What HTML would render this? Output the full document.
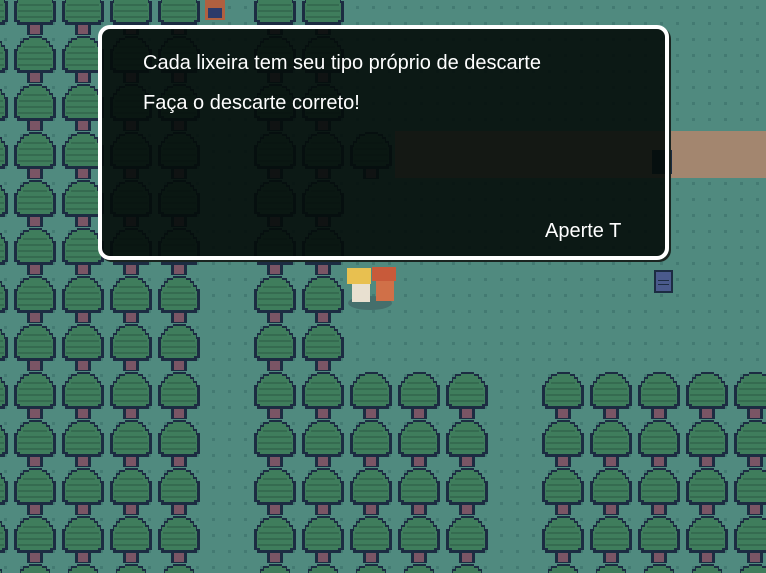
<!DOCTYPE html>
<html><head><meta charset="utf-8"><style>
html,body{margin:0;padding:0;width:766px;height:573px;overflow:hidden;background:#508a7f}
.dlg{position:absolute;left:98px;top:25px;width:563px;height:227px;border:4px solid #fff;border-radius:12px;background:rgba(4,12,10,0.9);box-shadow:2px 2px 0 #1a2420}
.t{position:absolute;color:#fff;font-family:"Liberation Sans",sans-serif;font-size:20px;white-space:nowrap}
</style></head><body>
<svg width="766" height="573" style="position:absolute;left:0;top:0">
<defs>
<pattern id="dots" patternUnits="userSpaceOnUse" width="16" height="16" x="4" y="6">
<rect x="0" y="0" width="3" height="3" fill="#437a72"/>
</pattern>
<pattern id="tree" patternUnits="userSpaceOnUse" width="48" height="48" x="14" y="36">
<rect x="13" y="35" width="16" height="12" fill="#1c2c42"/>
<rect x="16" y="36" width="10" height="10" fill="#7a5565"/>
<path d="M15 0H28V2H33V5H36V9H39V13H42V34H39V37H3V34H0V13H3V9H6V5H9V2H15Z" fill="#1c2c42"/>
<path d="M15 2H28V4H32V7H35V11H38V15H39V32H36V34H6V32H3V15H4V11H7V7H10V4H15Z" fill="#3f7d5c"/>
<rect x="9" y="10" width="24" height="2" fill="#356b50"/>
<rect x="5" y="16" width="32" height="2" fill="#356b50"/>
<rect x="4" y="22" width="34" height="2" fill="#356b50"/>
<rect x="4" y="28" width="34" height="2" fill="#356b50"/>
</pattern>
</defs>
<rect width="766" height="573" fill="url(#dots)"/>
<rect x="395" y="131" width="371" height="47" fill="#a3866f"/>
<rect x="0" y="0" width="206" height="573" fill="url(#tree)"/>
<rect x="254" y="0" width="96" height="573" fill="url(#tree)"/>
<rect x="350" y="132" width="48" height="48" fill="url(#tree)"/>
<rect x="350" y="372" width="144" height="201" fill="url(#tree)"/>
<rect x="542" y="372" width="224" height="201" fill="url(#tree)"/>
<rect x="652" y="150" width="20" height="24" fill="#1c2c42"/>
<rect x="654" y="270" width="19" height="23" fill="#1c2c42"/>
<rect x="656" y="272" width="15" height="19" fill="#4a5a8c"/>
<rect x="658" y="280" width="11" height="1" fill="#1c2c42"/><rect x="658" y="284" width="11" height="1" fill="#1c2c42"/>
<rect x="205" y="0" width="20" height="20" fill="#b06040"/>
<rect x="208" y="8" width="14" height="10" fill="#2c3a6a"/>
<ellipse cx="370" cy="303" rx="22" ry="7" fill="#456f6c"/>
<rect x="347" y="268" width="24" height="16" fill="#e8c050"/>
<rect x="352" y="284" width="18" height="18" fill="#e8e0d0"/>
<rect x="372" y="267" width="24" height="14" fill="#c85a3a"/>
<rect x="376" y="281" width="18" height="20" fill="#d07048"/>
</svg>
<div class="dlg"></div>
<div class="t" style="left:143px;top:52px">Cada lixeira tem seu tipo próprio de descarte</div>
<div class="t" style="left:143px;top:92px">Faça o descarte correto!</div>
<div class="t" style="left:545px;top:220px">Aperte T</div>
</body></html>
